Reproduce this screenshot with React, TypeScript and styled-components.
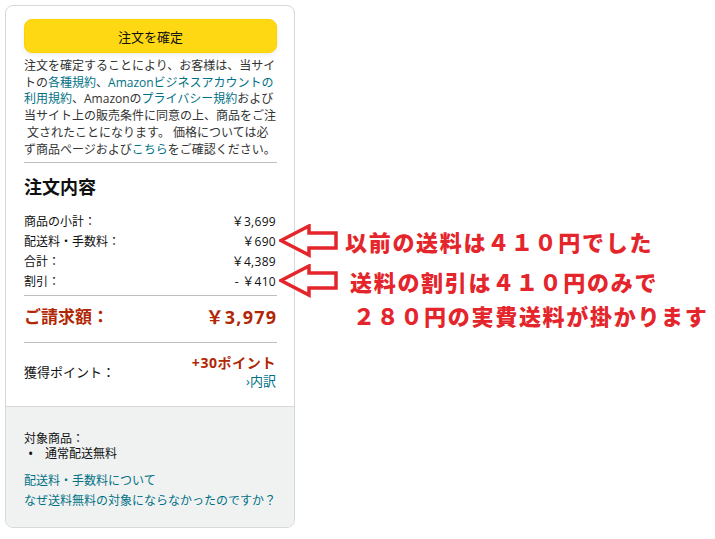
import React from "react";
import styled, { createGlobalStyle } from "styled-components";

const GlobalStyle = createGlobalStyle`
  html, body { margin: 0; padding: 0; background: #ffffff; }
  body {
    font-family: "Open Sans", "Noto Sans CJK JP", sans-serif;
    color: #0f1111;
  }
  * { box-sizing: border-box; }
`;

const Page = styled.div`
  position: relative;
  width: 715px;
  height: 539px;
  padding: 5px;
  display: flex;
  align-items: flex-start;
`;

const Card = styled.section`
  width: 290px;
  border: 1px solid #d5d9d9;
  border-radius: 8px;
  overflow: hidden;
  display: flex;
  flex-direction: column;
`;

const Main = styled.div`
  padding: 13px 17px 14.5px 18px;
  display: flex;
  flex-direction: column;
`;

const PlaceButton = styled.button`
  height: 34px;
  width: 100%;
  border-radius: 8px;
  background: #ffd814;
  border: 1px solid #fcd200;
  box-shadow: 0 2px 5px 0 rgba(213, 217, 217, 0.5);
  font-family: "Noto Sans CJK JP", sans-serif;
  font-size: 13px;
  color: #0f1111;
  display: flex;
  align-items: center;
  justify-content: center;
  padding: 0;
`;

const Terms = styled.div`
  margin-top: 5px;
  font-size: 12px;
  line-height: 16.7px;
  color: #333333;
`;

const Line = styled.span<{ $indent?: number }>`
  display: block;
  white-space: pre;
  padding-left: ${(p) => p.$indent ?? 0}px;
`;

const Link = styled.span`
  color: #007185;
`;

const Divider = styled.hr<{ $top: number }>`
  margin: ${(p) => p.$top}px 0 0;
  border: 0;
  height: 1px;
  background: #bbbfbf;
`;

const Heading = styled.h2`
  margin: 11px 0 0;
  font-family: "Noto Sans CJK JP", sans-serif;
  font-size: 18px;
  font-weight: 700;
  line-height: 24px;
`;

const Summary = styled.div`
  margin-top: 14px;
  display: flex;
  flex-direction: column;
`;

const Row = styled.div`
  display: flex;
  justify-content: space-between;
  padding-right: 1px;
  font-size: 12px;
  line-height: 20px;
  color: #0f1111;
`;

const Amount = styled.span`
  letter-spacing: 0.3px;
`;

const TotalRow = styled.div`
  margin-top: 9px;
  display: flex;
  justify-content: space-between;
  padding-right: 1px;
  font-size: 17px;
  font-weight: 700;
  line-height: 24px;
  color: #b12704;
`;

const TotalAmount = styled.span`
  font-size: 18px;
  letter-spacing: 1.2px;
  margin-right: -1.2px;
`;

const PointsRow = styled.div`
  margin-top: 10.5px;
  display: flex;
  justify-content: space-between;
  align-items: center;
  padding-right: 1px;
`;

const PointsLabel = styled.span`
  font-size: 13px;
  line-height: 19px;
`;

const PointsInfo = styled.div`
  display: flex;
  flex-direction: column;
  align-items: flex-end;
  line-height: 19px;
`;

const PointsValue = styled.span`
  font-size: 14px;
  font-weight: 700;
  letter-spacing: 0.6px;
  color: #b12704;
`;

const Breakdown = styled.span`
  font-size: 13px;
  color: #007185;
`;

const Footer = styled.div`
  border-top: 1px solid #d5d9d9;
  background: #f0f2f2;
  padding: 24.5px 17px 16px 18px;
  font-size: 12px;
  display: flex;
  flex-direction: column;
`;

const FooterText = styled.div`
  line-height: 15px;
`;

const Bullet = styled.div`
  display: flex;
  line-height: 15px;
  &::before {
    content: "•";
    flex-shrink: 0;
    width: 17px;
    padding-left: 4px;
    font-size: 14px;
  }
`;

const FooterLinks = styled.div`
  margin-top: 9.5px;
  display: flex;
  flex-direction: column;
  line-height: 20px;
  color: #007185;
`;

const Overlay = styled.div`
  position: absolute;
  left: 279px;
  top: 224px;
  display: flex;
  flex-direction: column;
  gap: 6px;
`;

const Callout = styled.div`
  display: flex;
  align-items: flex-start;
`;

const CalloutText = styled.div<{ $gap: number }>`
  margin-left: ${(p) => p.$gap}px;
  font-family: "Noto Sans CJK JP", sans-serif;
  font-weight: 900;
  font-size: 22px;
  letter-spacing: 1.7px;
  line-height: 34px;
  color: #e4262c;
  white-space: nowrap;
`;

const Arrow = () => (
  <svg width="60" height="34" viewBox="0 0 60 34" style={{ flexShrink: 0 }}>
    <polygon
      points="2,16.5 30,2 30,9 57,9 57,24 30,24 30,31"
      fill="none"
      stroke="#e4262c"
      strokeWidth="3.5"
      strokeLinejoin="miter"
    />
  </svg>
);

export default function App() {
  return (
    <>
      <GlobalStyle />
      <Page>
        <Card>
          <Main>
            <PlaceButton>注文を確定</PlaceButton>
            <Terms>
              <Line>注文を確定することにより、お客様は、当サイ</Line>
              <Line>
                トの<Link>各種規約</Link>、<Link>Amazonビジネスアカウントの</Link>
              </Line>
              <Line>
                <Link>利用規約</Link>、Amazonの<Link>プライバシー規約</Link>および
              </Line>
              <Line>当サイト上の販売条件に同意の上、商品をご注</Line>
              <Line>{" 文されたことになります。 価格については必"}</Line>
              <Line>
                ず商品ページおよび<Link>こちら</Link>をご確認ください。
              </Line>
            </Terms>
            <Divider $top={3.5} />
            <Heading>注文内容</Heading>
            <Summary>
              <Row>
                <span>商品の小計：</span>
                <Amount>￥3,699</Amount>
              </Row>
              <Row>
                <span>配送料・手数料：</span>
                <Amount>￥690</Amount>
              </Row>
              <Row>
                <span>合計：</span>
                <Amount>￥4,389</Amount>
              </Row>
              <Row>
                <span>割引：</span>
                <Amount>- ￥410</Amount>
              </Row>
            </Summary>
            <Divider $top={3.5} />
            <TotalRow>
              <span>ご請求額：</span>
              <TotalAmount>￥3,979</TotalAmount>
            </TotalRow>
            <Divider $top={12.5} />
            <PointsRow>
              <PointsLabel>獲得ポイント：</PointsLabel>
              <PointsInfo>
                <PointsValue>+30ポイント</PointsValue>
                <Breakdown>›内訳</Breakdown>
              </PointsInfo>
            </PointsRow>
          </Main>
          <Footer>
            <FooterText>対象商品：</FooterText>
            <Bullet>通常配送無料</Bullet>
            <FooterLinks>
              <span>配送料・手数料について</span>
              <span>なぜ送料無料の対象にならなかったのですか？</span>
            </FooterLinks>
          </Footer>
        </Card>
        <Overlay>
          <Callout>
            <Arrow />
            <CalloutText $gap={6}>以前の送料は４１０円でした</CalloutText>
          </Callout>
          <Callout>
            <Arrow />
            <CalloutText $gap={11}>
              <Line>送料の割引は４１０円のみで</Line>
              <Line $indent={3}>２８０円の実費送料が掛かります</Line>
            </CalloutText>
          </Callout>
        </Overlay>
      </Page>
    </>
  );
}
